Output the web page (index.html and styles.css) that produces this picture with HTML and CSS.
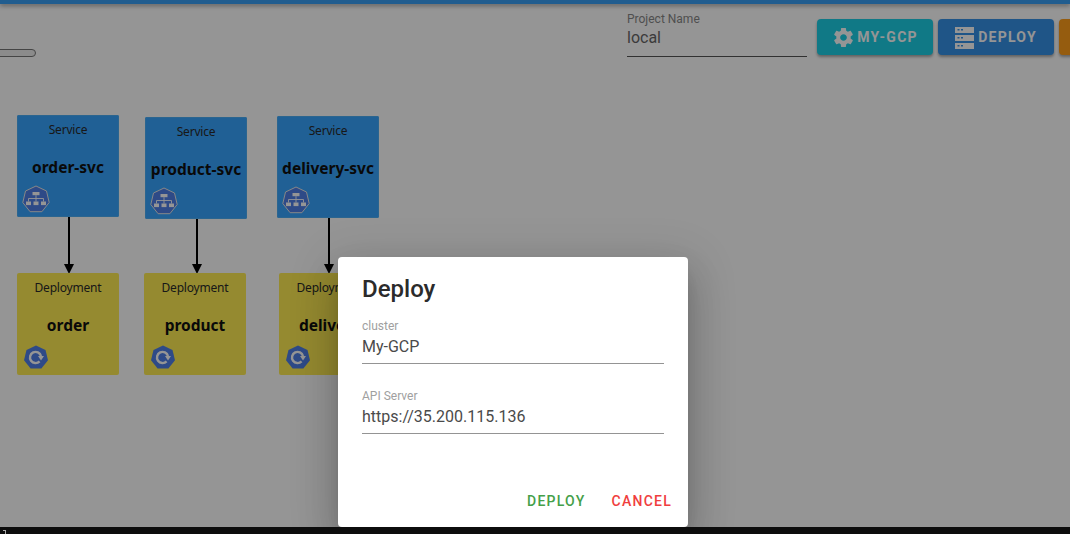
FILE: index.html
```html
<!DOCTYPE html>
<html lang="en">
<head>
<meta charset="utf-8">
<title>Deploy</title>
<link rel="stylesheet" href="styles.css">
</head>
<body>
<svg class="defs" width="0" height="0" aria-hidden="true">
  <defs>
    <g id="svc-icon">
      <polygon points="15,1.5 25.5,6.5 28.2,18 20.9,27.2 9.1,27.2 1.8,18 4.5,6.5" fill="#4f7fe8" stroke="#e8e8e8" stroke-width="1"/>
      <rect x="11.5" y="7.5" width="7" height="3.2" fill="#fff"/>
      <path d="M15 10.7v3.3M7.5 17v-3h15v3M15 14v3" fill="none" stroke="#fff" stroke-width="0.9"/>
      <rect x="5" y="17" width="5" height="3.6" fill="#fff"/>
      <rect x="12.5" y="17" width="5" height="3.6" fill="#fff"/>
      <rect x="20" y="17" width="5" height="3.6" fill="#fff"/>
    </g>
    <g id="dep-icon">
      <polygon points="12,0.5 21.5,5 24,15.2 17.4,23.5 6.6,23.5 0,15.2 2.5,5" fill="#4f7fe8"/>
      <path d="M15.6 16.4A5.6 5.6 0 1 1 17 11" fill="none" stroke="#fff" stroke-width="2.4"/>
      <polygon points="20,11 14,11 17,15.4" fill="#fff"/>
    </g>
  </defs>
</svg>
<div class="app">
  <div class="topbar"></div>
  <header class="toolbar">
    <div class="project">
      <span class="project-label">Project Name</span>
      <span class="project-value">local</span>
    </div>
    <div class="actions">
      <button class="btn btn-teal" type="button">
        <svg class="btn-icon" viewBox="0 0 24 24" width="23" height="23"><path fill="#fff" d="M19.43 12.98c.04-.32.07-.64.07-.98s-.03-.66-.07-.98l2.11-1.65c.19-.15.24-.42.12-.64l-2-3.46c-.12-.22-.39-.3-.61-.22l-2.49 1c-.52-.4-1.08-.73-1.69-.98l-.38-2.65C14.46 2.18 14.25 2 14 2h-4c-.25 0-.46.18-.49.42l-.38 2.65c-.61.25-1.17.59-1.69.98l-2.49-1c-.23-.09-.49 0-.61.22l-2 3.46c-.13.22-.07.49.12.64l2.11 1.65c-.04.32-.07.65-.07.98s.03.66.07.98l-2.11 1.65c-.19.15-.24.42-.12.64l2 3.46c.12.22.39.3.61.22l2.49-1c.52.4 1.08.73 1.69.98l.38 2.65c.03.24.24.42.49.42h4c.25 0 .46-.18.49-.42l.38-2.65c.61-.25 1.17-.59 1.69-.98l2.49 1c.23.09.49 0 .61-.22l2-3.46c.12-.22.07-.49-.12-.64l-2.11-1.65zM12 15.5c-1.93 0-3.5-1.57-3.5-3.5s1.57-3.5 3.5-3.5 3.5 1.57 3.5 3.5-1.57 3.5-3.5 3.5z"/></svg>
        MY-GCP
      </button>
      <button class="btn btn-blue" type="button">
        <svg class="btn-icon" viewBox="0 0 20 23" width="20" height="23"><path fill="#fff" fill-rule="evenodd" d="M0 1h19v6H0zM2.5 3v1.5h2V3zM6 3v1.5h2V3zM0 9h19v6H0zM2.5 11v1.5h2V11zM6 11v1.5h2V11zM0 17h19v6H0zM2.5 19v1.5h2V19zM6 19v1.5h2V19z"/></svg>
        DEPLOY
      </button>
      <button class="btn btn-orange" type="button"></button>
    </div>
  </header>

  <main class="canvas">
    <div class="scroller"></div>
    <svg class="edges" width="1070" height="534">
      <g stroke="#000" stroke-width="2" fill="#000">
        <path d="M69 217V266"/><polygon points="64,264 74,264 69,274" stroke="none"/>
        <path d="M197 219V266"/><polygon points="192,264 202,264 197,274" stroke="none"/>
        <path d="M329 218V266"/><polygon points="324,264 334,264 329,274" stroke="none"/>
      </g>
    </svg>

    <div class="node node-svc n-s1"><span class="node-kind">Service</span><strong class="node-name">order-svc</strong><svg class="node-icon" width="30" height="30" viewBox="0 0 30 29"><use href="#svc-icon"/></svg></div>
    <div class="node node-svc n-s2"><span class="node-kind">Service</span><strong class="node-name">product-svc</strong><svg class="node-icon" width="30" height="30" viewBox="0 0 30 29"><use href="#svc-icon"/></svg></div>
    <div class="node node-svc n-s3"><span class="node-kind">Service</span><strong class="node-name">delivery-svc</strong><svg class="node-icon" width="30" height="30" viewBox="0 0 30 29"><use href="#svc-icon"/></svg></div>

    <div class="node node-dep n-d1"><span class="node-kind">Deployment</span><strong class="node-name">order</strong><svg class="node-icon" width="24" height="24" viewBox="0 0 24 24"><use href="#dep-icon"/></svg></div>
    <div class="node node-dep n-d2"><span class="node-kind">Deployment</span><strong class="node-name">product</strong><svg class="node-icon" width="24" height="24" viewBox="0 0 24 24"><use href="#dep-icon"/></svg></div>
    <div class="node node-dep n-d3"><span class="node-kind">Deployment</span><strong class="node-name">delivery</strong><svg class="node-icon" width="24" height="24" viewBox="0 0 24 24"><use href="#dep-icon"/></svg></div>
  </main>

  <div class="scrim"></div>

  <section class="dialog">
    <h2 class="dialog-title">Deploy</h2>
    <div class="field">
      <span class="field-label">cluster</span>
      <span class="field-value">My-GCP</span>
    </div>
    <div class="field">
      <span class="field-label">API Server</span>
      <span class="field-value">https://35.200.115.136</span>
    </div>
    <div class="dialog-actions">
      <button class="text-btn text-green" type="button">DEPLOY</button>
      <button class="text-btn text-red" type="button">CANCEL</button>
    </div>
  </section>
</div>
<footer class="terminal"><span class="cursor"></span></footer>
</body>
</html>
```
FILE: styles.css
```css
* { box-sizing: border-box; }
html, body { margin: 0; padding: 0; height: 534px; overflow: hidden; }
body { font-family: Roboto, "Liberation Sans", sans-serif; background: #0d0d0d; }
.defs { position: absolute; }

.app { position: relative; width: 1070px; height: 527px; overflow: hidden; background: #ffffff; display: flex; flex-direction: column; }

.topbar { height: 4px; flex: none; background: #3aa0f5; box-shadow: 0 2px 4px rgba(0,0,0,.35); }

.toolbar { display: flex; flex: none; height: 52px; padding-left: 627px; white-space: nowrap; }
.project { width: 180px; height: 53px; padding-top: 8px; border-bottom: 1px solid #555; display: flex; flex-direction: column; flex: none; }
.project-label { font-size: 12px; line-height: 14px; color: #888; }
.project-value { font-size: 16px; line-height: 24px; color: #666; }

.actions { display: flex; gap: 5px; margin-left: 10px; padding-top: 15px; flex: none; }
.btn { width: 116px; height: 36px; border: 0; border-radius: 4px; padding: 0; display: flex; align-items: center; justify-content: center; gap: 1px; color: #fff; font: 700 14px Roboto, sans-serif; letter-spacing: 1.25px; box-shadow: 0 2px 3px rgba(0,0,0,.35); }
.btn-teal { background: #1dcfe6; }
.btn-blue { background: #3692e8; }
.btn-orange { background: #ff9e1a; }
.btn-icon { flex: none; margin-right: 1px; }
.btn-blue .btn-icon { margin-right: 2px; }

.canvas { position: relative; flex: 1; }
.scroller { position: absolute; left: -20px; top: 49px; width: 56px; height: 8px; border: 1px solid #777; border-radius: 4px; background: #eee; margin-top: -56px; }
.edges { position: absolute; left: 0; top: -56px; }

.node { position: absolute; width: 102px; height: 102px; border-radius: 2px; text-align: center; color: #000; font-family: "Noto Sans", "Open Sans", sans-serif; display: flex; flex-direction: column; align-items: center; }
.node-svc { background: #37a4ff; box-shadow: inset 0 0 0 1px #4aaef5; }
.node-dep { background: #ffec52; }
.node-kind { font-size: 12px; line-height: 16px; margin-top: 7px; letter-spacing: -0.2px; color: #2a2a2a; }
.node-name { font-size: 15.5px; line-height: 20px; margin-top: 18.5px; white-space: nowrap; color: #111; }
.node-icon { position: absolute; }
.node-svc .node-icon { left: 4px; top: 69px; }
.node-dep .node-icon { left: 7px; top: 72px; }

.n-s1 { left: 17px; top: 59px; }
.n-s2 { left: 145px; top: 61px; }
.n-s3 { left: 277px; top: 60px; }
.n-d1 { left: 17px; top: 217px; }
.n-d2 { left: 144px; top: 217px; }
.n-d3 { left: 279px; top: 217px; }

.scrim { position: absolute; inset: 0; background: rgba(0,0,0,.415); }

.dialog { position: absolute; left: 338px; top: 257px; width: 350px; height: 270px; background: #fff; border-radius: 4px; box-shadow: 0 11px 15px -7px rgba(0,0,0,.2), 0 24px 38px 3px rgba(0,0,0,.14), 0 9px 46px 8px rgba(0,0,0,.12); padding: 16px 24px 0; display: flex; flex-direction: column; }
.dialog-title { margin: 0; font-size: 24px; line-height: 32px; font-weight: 500; color: #2b2b2b; }
.field { display: flex; flex-direction: column; height: 45px; margin-top: 25px; border-bottom: 1px solid #949494; }
.field:first-of-type { margin-top: 14px; }
.field-label { font-size: 12px; line-height: 14px; color: #a0a0a0; }
.field-value { font-size: 16px; line-height: 24px; color: #4a4a4a; margin-top: 2px; }

.dialog-actions { display: flex; justify-content: flex-end; gap: 26px; margin-top: auto; margin-right: -8px; padding-bottom: 18px; }
.text-btn { border: 0; background: none; padding: 0; font: 500 14px/16px Roboto, sans-serif; letter-spacing: 1.25px; }
.text-green { color: #45a049; }
.text-red { color: #f03e3e; }

.terminal { height: 7px; position: relative; }
.cursor { position: absolute; left: 3px; top: 3px; width: 3px; height: 4px; border-top: 1px solid #aaa; border-right: 1px solid #aaa; }
```
